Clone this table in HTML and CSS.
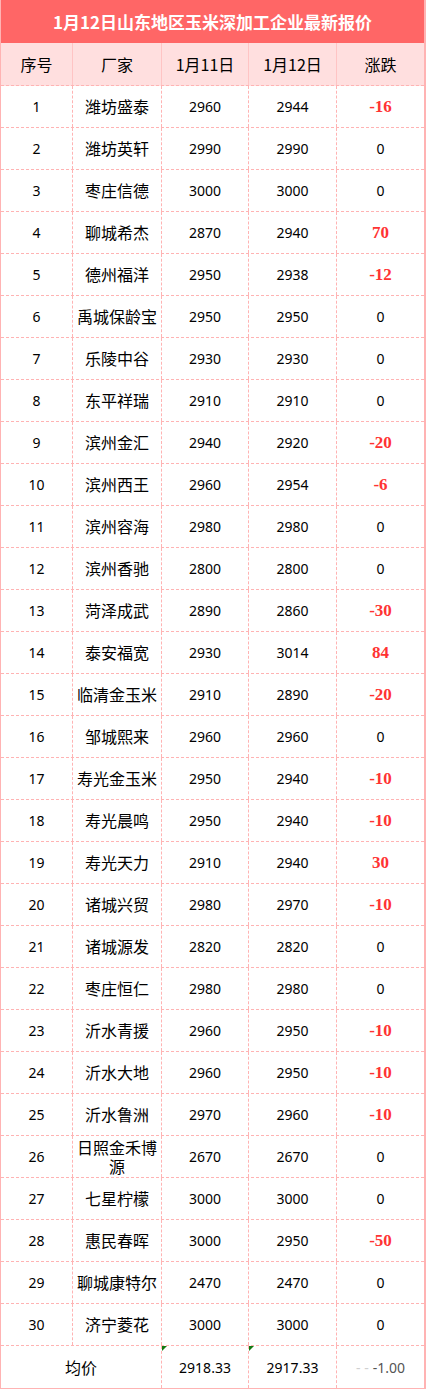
FILE: index.html
```html
<!DOCTYPE html>
<html lang="zh-CN">
<head>
<meta charset="utf-8">
<title>1月12日山东地区玉米深加工企业最新报价</title>
<link rel="stylesheet" href="styles.css">
</head>
<body>
<div class="sheet">
  <div class="title">1月12日山东地区玉米深加工企业最新报价</div>
  <div class="row head">
    <div class="c">序号</div><div class="c">厂家</div><div class="c">1月11日</div><div class="c">1月12日</div><div class="c">涨跌</div>
  </div>
  <div class="row"><div class="c n">1</div><div class="c">潍坊盛泰</div><div class="c n">2960</div><div class="c n">2944</div><div class="c n red">-16</div></div>
  <div class="row"><div class="c n">2</div><div class="c">潍坊英轩</div><div class="c n">2990</div><div class="c n">2990</div><div class="c n">0</div></div>
  <div class="row"><div class="c n">3</div><div class="c">枣庄信德</div><div class="c n">3000</div><div class="c n">3000</div><div class="c n">0</div></div>
  <div class="row"><div class="c n">4</div><div class="c">聊城希杰</div><div class="c n">2870</div><div class="c n">2940</div><div class="c n red">70</div></div>
  <div class="row"><div class="c n">5</div><div class="c">德州福洋</div><div class="c n">2950</div><div class="c n">2938</div><div class="c n red">-12</div></div>
  <div class="row"><div class="c n">6</div><div class="c">禹城保龄宝</div><div class="c n">2950</div><div class="c n">2950</div><div class="c n">0</div></div>
  <div class="row"><div class="c n">7</div><div class="c">乐陵中谷</div><div class="c n">2930</div><div class="c n">2930</div><div class="c n">0</div></div>
  <div class="row"><div class="c n">8</div><div class="c">东平祥瑞</div><div class="c n">2910</div><div class="c n">2910</div><div class="c n">0</div></div>
  <div class="row"><div class="c n">9</div><div class="c">滨州金汇</div><div class="c n">2940</div><div class="c n">2920</div><div class="c n red">-20</div></div>
  <div class="row"><div class="c n">10</div><div class="c">滨州西王</div><div class="c n">2960</div><div class="c n">2954</div><div class="c n red">-6</div></div>
  <div class="row"><div class="c n">11</div><div class="c">滨州容海</div><div class="c n">2980</div><div class="c n">2980</div><div class="c n">0</div></div>
  <div class="row"><div class="c n">12</div><div class="c">滨州香驰</div><div class="c n">2800</div><div class="c n">2800</div><div class="c n">0</div></div>
  <div class="row"><div class="c n">13</div><div class="c">菏泽成武</div><div class="c n">2890</div><div class="c n">2860</div><div class="c n red">-30</div></div>
  <div class="row"><div class="c n">14</div><div class="c">泰安福宽</div><div class="c n">2930</div><div class="c n">3014</div><div class="c n red">84</div></div>
  <div class="row"><div class="c n">15</div><div class="c">临清金玉米</div><div class="c n">2910</div><div class="c n">2890</div><div class="c n red">-20</div></div>
  <div class="row"><div class="c n">16</div><div class="c">邹城熙来</div><div class="c n">2960</div><div class="c n">2960</div><div class="c n">0</div></div>
  <div class="row"><div class="c n">17</div><div class="c">寿光金玉米</div><div class="c n">2950</div><div class="c n">2940</div><div class="c n red">-10</div></div>
  <div class="row"><div class="c n">18</div><div class="c">寿光晨鸣</div><div class="c n">2950</div><div class="c n">2940</div><div class="c n red">-10</div></div>
  <div class="row"><div class="c n">19</div><div class="c">寿光天力</div><div class="c n">2910</div><div class="c n">2940</div><div class="c n red">30</div></div>
  <div class="row"><div class="c n">20</div><div class="c">诸城兴贸</div><div class="c n">2980</div><div class="c n">2970</div><div class="c n red">-10</div></div>
  <div class="row"><div class="c n">21</div><div class="c">诸城源发</div><div class="c n">2820</div><div class="c n">2820</div><div class="c n">0</div></div>
  <div class="row"><div class="c n">22</div><div class="c">枣庄恒仁</div><div class="c n">2980</div><div class="c n">2980</div><div class="c n">0</div></div>
  <div class="row"><div class="c n">23</div><div class="c">沂水青援</div><div class="c n">2960</div><div class="c n">2950</div><div class="c n red">-10</div></div>
  <div class="row"><div class="c n">24</div><div class="c">沂水大地</div><div class="c n">2960</div><div class="c n">2950</div><div class="c n red">-10</div></div>
  <div class="row"><div class="c n">25</div><div class="c">沂水鲁洲</div><div class="c n">2970</div><div class="c n">2960</div><div class="c n red">-10</div></div>
  <div class="row"><div class="c n">26</div><div class="c">日照金禾博源</div><div class="c n">2670</div><div class="c n">2670</div><div class="c n">0</div></div>
  <div class="row"><div class="c n">27</div><div class="c">七星柠檬</div><div class="c n">3000</div><div class="c n">3000</div><div class="c n">0</div></div>
  <div class="row"><div class="c n">28</div><div class="c">惠民春晖</div><div class="c n">3000</div><div class="c n">2950</div><div class="c n red">-50</div></div>
  <div class="row"><div class="c n">29</div><div class="c">聊城康特尔</div><div class="c n">2470</div><div class="c n">2470</div><div class="c n">0</div></div>
  <div class="row"><div class="c n">30</div><div class="c">济宁菱花</div><div class="c n">3000</div><div class="c n">3000</div><div class="c n">0</div></div>
  <div class="row last">
    <div class="c span2">均价</div>
    <div class="c n flag">2918.33</div>
    <div class="c n flag">2917.33</div>
    <div class="c n"><span class="faint">- -</span><span class="ghost">-1.00</span></div>
  </div>
</div>
</body>
</html>
```
FILE: styles.css
```css
html, body {
  margin: 0;
  padding: 0;
  background: #ffffff;
}
body {
  font-family: "Noto Sans CJK SC", "Noto Sans", sans-serif;
  color: #000;
}
.sheet {
  width: 426px;
  box-sizing: border-box;
  border-left: 1px solid #ffb3b3;
  border-right: 2px solid #ffb3b3;
  border-bottom: 1px solid #ffb3b3;
}
.title {
  height: 43px;
  background: #ff6666;
  color: #ffffff;
  font-weight: bold;
  font-size: 17px;
  display: flex;
  align-items: center;
  justify-content: center;
}
.row {
  display: grid;
  grid-template-columns: 72px 89px 87px 88px 87px;
  height: 42px;
  box-sizing: border-box;
  border-bottom: 1px dashed #ffb3b3;
}
.row.head {
  height: 43px;
  background: #ffdfdf;
}
.row.last {
  border-bottom: none;
  grid-template-columns: 161px 87px 88px 87px;
}
.c {
  display: flex;
  align-items: center;
  justify-content: center;
  text-align: center;
  font-size: 16px;
  line-height: 19px;
  padding: 0 2px;
  box-sizing: border-box;
  border-right: 1px dashed #ffb3b3;
  position: relative;
}
.c:last-child {
  border-right: none;
}
.head .c {
  border-right: 1px solid #ffc4c4;
}
.head .c:last-child {
  border-right: none;
}
.n {
  font-family: "Noto Sans", sans-serif;
  font-size: 14px;
}
.red {
  color: #ff3333;
  font-weight: bold;
  font-family: "Liberation Serif", serif;
  font-size: 17px;
}
.flag::before {
  content: "";
  position: absolute;
  left: 0;
  top: 0;
  width: 0;
  height: 0;
  border-top: 5px solid #127a12;
  border-right: 5px solid transparent;
}
.ghost {
  color: #555555;
}
.faint {
  color: #d0d0d0;
  margin-right: 4px;
}
```
